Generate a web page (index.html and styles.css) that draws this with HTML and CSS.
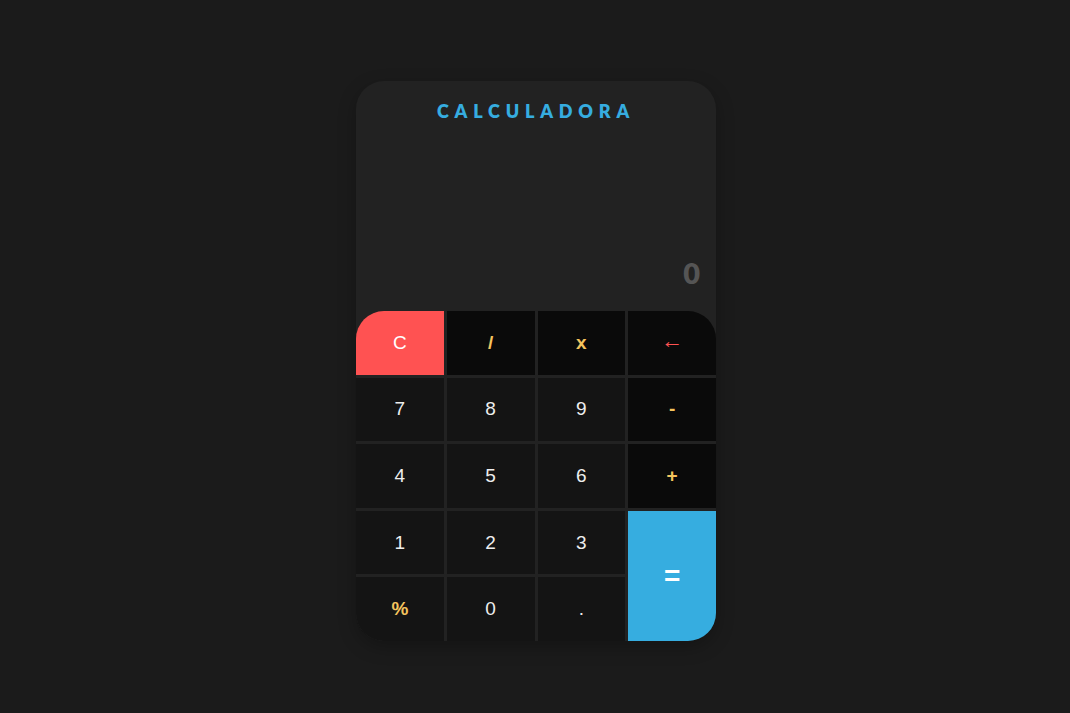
FILE: index.html
```html
<!DOCTYPE html>
<html lang="pt">
<head>
<meta charset="utf-8">
<title>Calculadora</title>
<link rel="stylesheet" href="styles.css">
</head>
<body>
<main class="calc">
  <header class="screen">
    <h1 class="title">CALCULADORA</h1>
    <div class="display">0</div>
  </header>
  <section class="keys">
    <button class="key clear">C</button>
    <button class="key op">/</button>
    <button class="key op">x</button>
    <button class="key op back">&larr;</button>
    <button class="key">7</button>
    <button class="key">8</button>
    <button class="key">9</button>
    <button class="key op">-</button>
    <button class="key">4</button>
    <button class="key">5</button>
    <button class="key">6</button>
    <button class="key op">+</button>
    <button class="key">1</button>
    <button class="key">2</button>
    <button class="key">3</button>
    <button class="key equal">=</button>
    <button class="key pct">%</button>
    <button class="key">0</button>
    <button class="key">.</button>
  </section>
</main>
</body>
</html>
```

FILE: styles.css
```css
html, body {
  margin: 0;
  height: 100%;
}
body {
  background: #1b1b1b;
  display: flex;
  justify-content: center;
  padding: 81px 0 0 2px;
  box-sizing: border-box;
  font-family: "Liberation Sans", Arial, sans-serif;
}
.calc {
  width: 360px;
  height: 560px;
  background: #222222;
  border-radius: 28px;
  overflow: hidden;
  display: flex;
  flex-direction: column;
  box-shadow: 0 6px 18px rgba(0, 0, 0, 0.25);
}
.screen {
  height: 230px;
  display: flex;
  flex-direction: column;
  justify-content: space-between;
  box-sizing: border-box;
  padding: 19px 16px 23px;
}
.title {
  margin: 0;
  text-align: center;
  font-family: "Lato", "Inter", sans-serif;
  font-weight: 800;
  font-size: 18px;
  letter-spacing: 5.8px;
  color: #36ade0;
  line-height: 22px;
}
.display {
  text-align: right;
  font-family: "Lato", "Inter", sans-serif;
  font-weight: 800;
  font-size: 29px;
  line-height: 30px;
  color: #555555;
}
.keys {
  flex: 1;
  display: grid;
  grid-template-columns: repeat(4, 1fr);
  grid-template-rows: repeat(5, 1fr);
  gap: 3px;
  background: #222222;
}
.key {
  border: none;
  margin: 0;
  padding: 0;
  background: #141414;
  color: #eeeeee;
  font-family: "Liberation Sans", Arial, sans-serif;
  font-size: 19px;
  cursor: pointer;
}
.op {
  background: #0a0a0a;
  color: #f5c45e;
  font-weight: bold;
}
.pct {
  color: #f5c45e;
  font-weight: bold;
}
.op.back {
  color: #ff5252;
  font-weight: normal;
  font-size: 22px;
  padding-bottom: 4px;
  border-top-right-radius: 28px;
}
.clear {
  background: #ff5252;
  color: #ffffff;
  border-top-left-radius: 28px;
}
.equal {
  grid-row: span 2;
  background: #36ade0;
  color: #ffffff;
  font-size: 28px;
  font-weight: bold;
}
```
